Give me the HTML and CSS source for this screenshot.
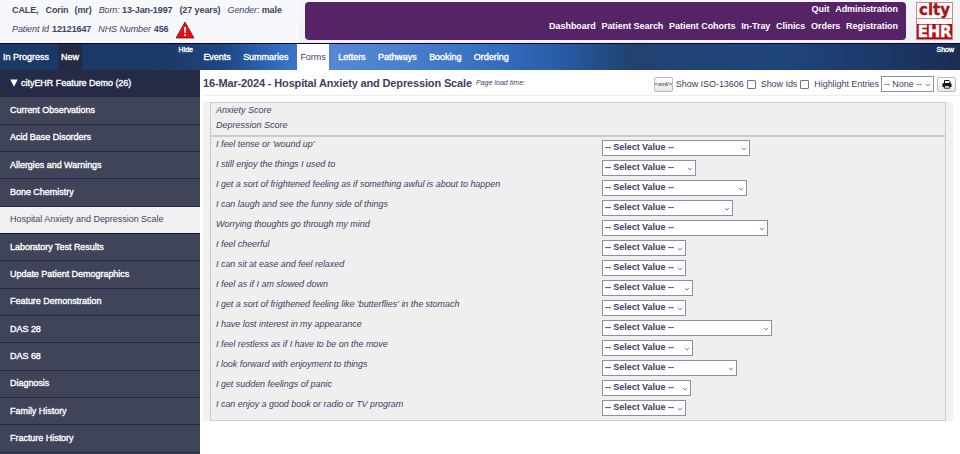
FILE: index.html
```
<!DOCTYPE html>
<html lang="en">
<head>
<meta charset="utf-8">
<title>cityEHR</title>
<link rel="stylesheet" href="styles.css">
</head>
<body>
<header class="top">
  <div class="patient">
    <div class="patient-row first"><b class="surname">CALE,</b><b class="forename">Corin</b><b class="title">(mr)</b><i>Born:</i><b class="dob">13-Jan-1997</b><b class="age">(27 years)</b><i>Gender:</i><b>male</b></div>
    <div class="patient-row second"><i>Patient Id</i><b class="pid">12121647</b><i>NHS Number</i><b>456</b>
      <svg class="alert" viewBox="0 0 20 18"><path d="M10 1 19 17H1Z" fill="#f20d0d" stroke="#4c2525" stroke-width=".8" stroke-linejoin="round"/><path d="M8.9 6h2.2l-.4 6H9.3zM9 13.2h2v1.7H9z" fill="#fff"/></svg>
    </div>
  </div>
  <nav class="main-menu">
    <div class="menu-row"><span>Quit</span><span>Administration</span></div>
    <div class="menu-row"><span>Dashboard</span><span>Patient Search</span><span>Patient Cohorts</span><span>In-Tray</span><span>Clinics</span><span>Orders</span><span>Registration</span></div>
  </nav>
  <div class="logo"><span class="logo-city">city</span><span class="logo-ehr">EHR</span></div>
</header>
<div class="bar">
  <div class="bar-left"><span class="tab progress">In Progress</span><span class="tab new">New</span><span class="toggle">Hide</span></div>
  <div class="bar-tabs"><span class="tab">Events</span><span class="tab">Summaries</span><span class="tab current">Forms</span><span class="tab">Letters</span><span class="tab">Pathways</span><span class="tab">Booking</span><span class="tab">Ordering</span></div>
  <span class="toggle">Show</span>
</div>
<div class="body">
  <aside class="side">
    <div class="item head"><svg class="tri" viewBox="0 0 8 8"><path d="M.3.5h7.4L4 7.7z" fill="#fff"/></svg>cityEHR Feature Demo (26)</div>
    <div class="item">Current Observations</div>
    <div class="item">Acid Base Disorders</div>
    <div class="item">Allergies and Warnings</div>
    <div class="item">Bone Chemistry</div>
    <div class="item active">Hospital Anxiety and Depression Scale</div>
    <div class="item">Laboratory Test Results</div>
    <div class="item">Update Patient Demographics</div>
    <div class="item">Feature Demonstration</div>
    <div class="item">DAS 28</div>
    <div class="item">DAS 68</div>
    <div class="item">Diagnosis</div>
    <div class="item">Family History</div>
    <div class="item">Fracture History</div>
  </aside>
  <main class="content">
    <div class="heading">
      <h1>16-Mar-2024 - Hospital Anxiety and Depression Scale</h1><i class="load">Page load time:</i>
      <div class="tools">
        <span class="btn xml">&lt;xml/&gt;</span><span class="t-iso">Show ISO-13606</span><span class="check"></span><span class="t-ids">Show Ids</span><span class="check"></span><span class="t-hl">Highlight Entries</span>
        <span class="select none"><span>-- None --</span><svg class="chev" viewBox="0 0 6 4"><path d="M1 .8 3 3 5 .8"/></svg></span>
        <span class="btn print"><svg viewBox="0 0 10 10"><path d="M2.5 4.5V1.5h4.5l.8.8v2" fill="#fff" stroke="#111" stroke-width="1"/><path d="M1.5 4h7l1 1v3h-9V5z" fill="#111"/><path d="M2.4 6.8h5.2v2.4H2.4z" fill="#fff" stroke="#111" stroke-width=".9"/></svg></span>
      </div>
    </div>
    <div class="sheet">
      <div class="form">
        <div class="scores"><div>Anxiety Score</div><div>Depression Score</div></div>
        <div class="questions" id="questions"></div>
      </div>
    </div>
  </main>
</div>
<script src="form.js"></script>
</body>
</html>
```
FILE: form.js
```
const questions = [
  ["I feel tense or 'wound up'", 148],
  ["I still enjoy the things I used to", 94],
  ["I get a sort of frightened feeling as if something awful is about to happen", 145],
  ["I can laugh and see the funny side of things", 131],
  ["Worrying thoughts go through my mind", 166],
  ["I feel cheerful", 84],
  ["I can sit at ease and feel relaxed", 84],
  ["I feel as if I am slowed down", 91],
  ["I get a sort of frigthened feeling like 'butterflies' in the stomach", 84],
  ["I have lost interest in my appearance", 170],
  ["I feel restless as if I have to be on the move", 91],
  ["I look forward with enjoyment to things", 135],
  ["I get sudden feelings of panic", 89],
  ["I can enjoy a good book or radio or TV program", 84]
];
document.getElementById("questions").innerHTML = questions.map(([label, width]) =>
  `<div class="q"><span class="label">${label}</span><span class="select" style="width:${width}px"><b>-- Select Value --</b><svg class="chev" viewBox="0 0 6 4"><path d="M1 .8 3 3 5 .8"/></svg></span></div>`
).join("");
```
FILE: styles.css
```
* { box-sizing: border-box; }
body { margin: 0; width: 960px; height: 454px; overflow: hidden; background: #fff; color: #3f4062; font: 9px/12px "Liberation Sans", Arial, sans-serif; white-space: nowrap; }
.top { display: flex; height: 43px; background: linear-gradient(#f4f6fb, #f0f1f7); }
.patient { width: 299px; height: 43px; background: #f6f8fc; padding: 4px 0 0 12px; margin-right: 6px; letter-spacing: -.1px; }
.patient-row { display: flex; height: 12px; align-items: center; }
.patient-row i { margin-right: 3px; }
.surname { margin-right: 7px; }
.forename { margin-right: 6px; }
.title, .age, .pid { margin-right: 7px; }
.dob { margin-right: 7px; }
.first i { margin-right: 2.4px; }
.second { margin-top: 6px; height: 14px; }
.alert { width: 20px; height: 18px; margin: 1px 0 0 6px; }
.main-menu { width: 601px; height: 38px; margin-top: 2px; background: #562366; border-radius: 4px; padding: 1px 8px 0 0; color: #fff; font-weight: bold; letter-spacing: -.05px; }
.menu-row { display: flex; justify-content: flex-end; gap: 5.8px; height: 17px; }
.logo { display: flex; flex-direction: column; justify-content: space-between; width: 37px; height: 38px; margin: 2px 0 0 10px; border: 1px solid #d28686; background: #fff; font: bold 15px/16px "DejaVu Sans", sans-serif; text-align: center; }
.logo-city { height: 16px; color: #a8141a; border-bottom: 1px solid #d28686; line-height: 14px; -webkit-text-stroke: .4px #a8141a; }
.logo-ehr { height: 15px; background: #b5080c; color: #fff; font-size: 15px; line-height: 16px; letter-spacing: -.3px; -webkit-text-stroke: .4px #fff; }
.bar { display: flex; height: 27px; border-top: 1px solid #00005a; color: #fff; background: linear-gradient(90deg, #1b3a68 0, #1b3866 85px, #1c3a69 170px, #1f4785 225px, #3470c4 285px, #5488d1 335px, #4a80cd 400px, #356fc1 490px, #285ca6 560px, #214270 630px, #20447c 780px, #1c3968 880px, #1a2c54 960px); }
.tab, .item:not(.active), .toggle { -webkit-text-stroke: .35px #fff; }
.bar-left { display: flex; width: 199px; }
.tab { display: flex; align-items: center; height: 26px; padding-bottom: 1px; }
.progress { padding: 0 9px 1px 3px; width: 58px; }
.new { padding-left: 3px; width: 24px; background: #242a43; }
.toggle { font-size: 7px; line-height: 11px; margin-left: auto; padding-right: 6px; }
.bar-tabs { display: flex; letter-spacing: -.03px; }
.bar-tabs .tab { padding: 0 6px 1px 4.4px; margin-right: 2px; }
.bar-tabs .current { background: #fff; color: #3f4062; -webkit-text-stroke: 0; height: 27px; padding: 0 3px 1px; margin: 0 4.5px 0 1px; width: 32px; }
.body { display: flex; height: 384px; }
.side { width: 200px; height: 384px; overflow: hidden; background: #3f4459; }
.item { display: flex; align-items: center; height: 27.35px; padding: 0 0 1px 10px; color: #fff; border-bottom: 1px solid #222944; letter-spacing: -.03px; }
.head { background: #252b44; }
.tri { width: 8px; height: 8px; margin-right: 3px; }
.active { background: #f0f0f0; color: #45465f; border-bottom-color: #15182b; }
.content { flex: 1; padding-left: 3px; }
.heading { display: flex; align-items: center; height: 26px; border-bottom: 1px solid #ededed; }
h1 { margin: 0; font-size: 11px; line-height: 14px; letter-spacing: -.15px; }
.load { font-size: 7px; margin-left: 4px; letter-spacing: .04px; }
.tools { display: flex; align-items: center; margin: 3px 4px 0 auto; letter-spacing: -.05px; }
.btn { display: flex; align-items: center; justify-content: center; width: 19px; height: 15px; border: 1px solid #bbb; border-radius: 2px; background: linear-gradient(#fff, #e7e7e7); }
.xml { font-size: 6px; color: #222; margin-right: 3px; overflow: hidden; }
.check { width: 9px; height: 9px; margin: 0 5px 0 3px; border: 1px solid #72728d; border-radius: 1px; background: #fff; }
.select { display: flex; align-items: center; justify-content: space-between; height: 16px; border: 1px solid #8d8da4; background: #fff; padding: 0 2px 1px; }
.none { width: 53px; margin: 0 3px 0 2px; }
.chev { width: 6px; height: 4px; margin-top: 3px; fill: none; stroke: #62627a; stroke-width: .8; }
.print svg { width: 10px; height: 10px; }
.sheet { margin: 6px 7px 0 0; padding: 0 7px; background: #f1f1f1; height: 319px; }
.form { height: 319px; border: 1px solid #ccc; background: #efefef; }
.scores { height: 34px; padding: 0 0 0 5px; border-bottom: 2px solid #ccc; font-style: italic; line-height: 15px; }
.q { display: flex; height: 20px; padding: 3px 0 0 5px; }
.label { width: 386px; margin-top: -2px; font-style: italic; letter-spacing: -.04px; }
.q .select { letter-spacing: -.04px; padding-bottom: 2px; }
```
